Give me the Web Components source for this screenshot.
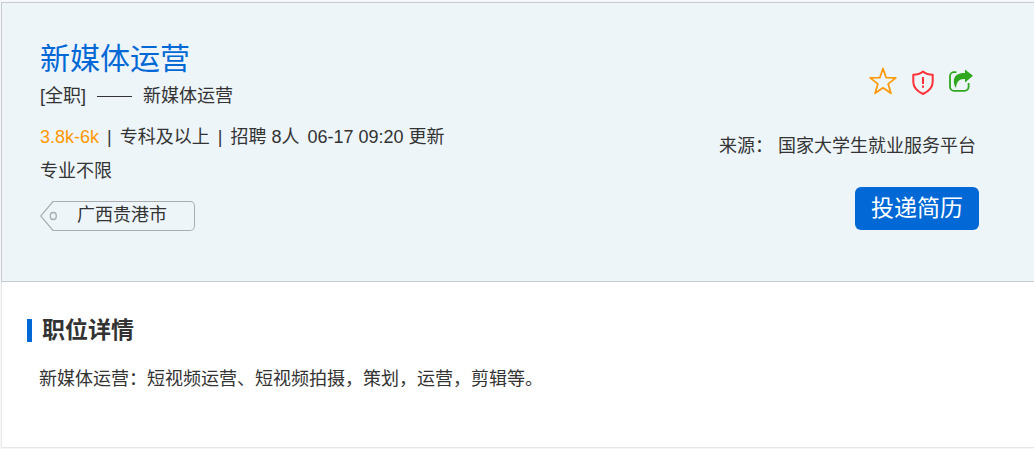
<!DOCTYPE html>
<html lang="zh-CN">
<head>
<meta charset="utf-8">
<title>新媒体运营</title>
<style>
  * { box-sizing: border-box; }
  body {
    margin: 0;
    padding: 2px 0 0 1px;
    background: #f5f7fa;
    color: #333;
    font: 18px/24px "Liberation Sans", "Noto Sans CJK SC", sans-serif;
  }
</style>
</head>
<body>
<job-page>
  <job-header slot="header">
    <job-summary slot="summary" name="新媒体运营" kind="[全职]" category="新媒体运营" salary="3.8k-6k"
      degree="专科及以上" count="招聘 8人" updated="06-17 09:20 更新" major="专业不限">
      <place-tag>广西贵港市</place-tag>
    </job-summary>
    <job-actions slot="actions" source="国家大学生就业服务平台">投递简历</job-actions>
  </job-header>
  <job-detail heading="职位详情">新媒体运营：短视频运营、短视频拍摄，策划，运营，剪辑等。</job-detail>
</job-page>
<script>
  class Base extends HTMLElement {
    connectedCallback() {
      if (this.shadowRoot) return;
      this.attachShadow({ mode: "open" }).innerHTML =
        "<style>*{box-sizing:border-box}h1,h2,p{margin:0}</style>" + this.view();
    }
    a(name) { return this.getAttribute(name) || ""; }
  }

  customElements.define("job-page", class extends Base {
    view() {
      return `<style>:host{display:block}</style>
        <main><slot name="header"></slot><slot></slot></main>`;
    }
  });

  customElements.define("job-header", class extends Base {
    view() {
      return `<style>
        :host{display:flex;justify-content:space-between;align-items:flex-start;
          padding:36px 55px 50px 38px;background:#edf5f9;
          border:1px solid #c6cbd0;border-right:0}
        </style><slot name="summary"></slot><slot name="actions"></slot>`;
    }
  });

  customElements.define("job-summary", class extends Base {
    view() {
      return `<style>
        :host{display:block}
        h1{font-size:30px;line-height:40px;font-weight:400;color:#0168d6}
        .kind,.facts{display:flex;align-items:center}
        .kind{gap:11px;margin-top:3px;line-height:28px}
        .dash{width:35px;height:1px;background:#333}
        .facts{gap:8px;margin-top:13px;line-height:28px;white-space:pre}
        .salary{color:#ff9800}
        .major{margin-top:6px;line-height:28px}
        .tags{margin-top:16px}
        </style>
        <h1>${this.a("name")}</h1>
        <p class="kind"><span>${this.a("kind")}</span><span class="dash"></span><span>${this.a("category")}</span></p>
        <p class="facts"><span class="salary">${this.a("salary")}</span><span>|</span><span>${this.a("degree")}</span><span>|</span><span>${this.a("count")}</span><span>${this.a("updated")}</span></p>
        <p class="major">${this.a("major")}</p>
        <div class="tags"><slot></slot></div>`;
    }
  });

  customElements.define("place-tag", class extends Base {
    view() {
      return `<style>
        :host{display:inline-flex;height:30px;vertical-align:top}
        svg{display:block;flex:none}
        span{height:30px;padding:0 27px 0 17px;line-height:26px;
          border:1px solid #a9adb0;border-left:0;border-radius:0 5px 5px 0}
        </style>
        <svg width="20" height="30" viewBox="0 0 20 30" fill="none" stroke="#a9adb0" aria-hidden="true">
          <path d="M20 .5H13L.7 15 13 29.5h7" stroke-width="1.200"/><ellipse cx="13.300" cy="15" rx="3" ry="3.500" stroke-width="1.400"/>
        </svg><span><slot></slot></span>`;
    }
  });

  customElements.define("job-actions", class extends Base {
    view() {
      return `<style>
        :host{display:flex;flex-direction:column;align-items:flex-end;padding-top:26px}
        button{font-family:inherit;border:0;padding:0;cursor:pointer}
        .icons{display:flex;gap:10px;margin-right:6px}
        .icons button{display:block;background:none;height:32px}
        svg{display:block}
        .source{margin:35px 3px 0 0;line-height:28px;white-space:nowrap}
        .source b{font-weight:400}
        .apply{margin-top:27px;padding:0 16px;height:43px;border-radius:6px;background:#0168d6;
          color:#fff;font-size:23px;line-height:41px}
        </style>
        <div class="icons">
          <button type="button" aria-label="收藏"><svg width="30" height="32" viewBox="0 0 30 32" fill="none" stroke="#ff9a0c" stroke-width="1.8" stroke-linejoin="round"><path d="M14 3.500l3.200 9.200 9.600.2-7.600 6 2.700 9.400-7.900-5.500-7.900 5.500 2.700-9.400-7.600-6 9.600-.2z"/></svg></button>
          <button type="button" aria-label="举报"><svg width="28" height="32" viewBox="0 0 28 32" fill="none" stroke="#ff3038" stroke-width="2" stroke-linejoin="round"><path d="M14 6.500C11 9.200 8 9.700 4.300 9.800v7.200c0 5.500 4.500 9.500 9.700 12 5.200-2.500 9.700-6.500 9.700-12V9.800C20 9.700 17 9.200 14 6.500z"/><path d="M14 12v7M14 20.500v2.300"/></svg></button>
          <button type="button" aria-label="分享"><svg width="26" height="32" viewBox="0 0 26 32"><path d="M9.500 7.200H7a4 4 0 0 0-4 4v10.600a4 4 0 0 0 4 4h10.600a4 4 0 0 0 4-4V18" fill="none" stroke="#2fa81f" stroke-width="1.800"/><path d="M18 4.500l8 6.300-8 6.700V14c-6-.2-8.300 2.500-9 9-2-2.700-2.500-5.700-2-8.500.8-4.500 4.500-6.700 11-6.500z" fill="#2fa81f"/></svg></button>
        </div>
        <p class="source"><b>来源：</b> <span>${this.a("source")}</span></p>
        <button type="button" class="apply"><slot></slot></button>`;
    }
  });

  customElements.define("job-detail", class extends Base {
    view() {
      return `<style>
        :host{display:block;background:#fff;padding:32px 24px 54px 25px;
          border:1px solid #e6e8ea;border-top:0;border-right:0}
        h2{display:flex;align-items:center;gap:10px;font-size:23px;line-height:32px}
        h2::before{content:"";width:5px;height:23px;background:#0168d6}
        p{margin:19px 0 0 12px;line-height:28px}
        </style>
        <h2>${this.a("heading")}</h2><p><slot></slot></p>`;
    }
  });
</script>
</body>
</html>
